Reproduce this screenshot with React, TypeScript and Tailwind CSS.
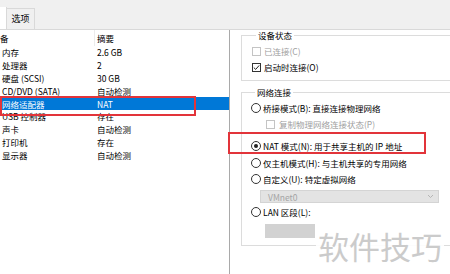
import React from 'react';

const rows: [string, string][] = [
  ['内存', '2.6 GB'],
  ['处理器', '2'],
  ['硬盘 (SCSI)', '30 GB'],
  ['CD/DVD (SATA)', '自动检测'],
  ['网络适配器', 'NAT'],
  ['USB 控制器', '存在'],
  ['声卡', '自动检测'],
  ['打印机', '存在'],
  ['显示器', '自动检测'],
];

function CheckBox({ checked, disabled }: { checked?: boolean; disabled?: boolean }) {
  return (
    <span
      className={`w-[9px] h-[9px] shrink-0 border bg-white flex items-center justify-center ${
        disabled ? 'border-[#c4c4c4]' : 'border-[#333]'
      }`}
    >
      {checked && (
        <svg width="7" height="7" viewBox="0 0 7 7">
          <path d="M0.8 3.6 L2.7 5.4 L6.2 1.4" stroke="#222" strokeWidth="1" fill="none" />
        </svg>
      )}
    </span>
  );
}

function Radio({ checked }: { checked?: boolean }) {
  return (
    <span className="w-[10px] h-[10px] shrink-0 rounded-full border border-[#333] bg-white flex items-center justify-center">
      {checked && <span className="w-[4px] h-[4px] rounded-full bg-[#222]" />}
    </span>
  );
}

export default function App() {
  return (
    <div
      className="relative w-[450px] h-[274px] overflow-hidden bg-white text-[8.5px] leading-[12px] text-black"
      style={{ fontFamily: '"Noto Sans CJK SC", "Noto Sans", sans-serif' }}
    >
      {/* Tab strip */}
      <div className="h-[30px] bg-[#f0f0f0] border-b border-[#d9d9d9] flex items-end">
        <div className="w-[7px] h-[22px] bg-white border-r border-[#d9d9d9]" />
        <div className="w-[28px] h-[21px] border-t border-r border-[#d9d9d9] bg-[#f0f0f0] flex items-center justify-center text-[9px]">
          选项
        </div>
      </div>

      <div className="flex h-[244px]">
        {/* Device list */}
        <div className="w-[230px] shrink-0 border-r border-[#a9a9a9] overflow-hidden">
          <div className="h-[16px] flex items-center">
            <div className="w-[95px] h-full flex items-center border-r border-[#ececec]">
              <span>备</span>
            </div>
            <div className="pl-[2px]">摘要</div>
          </div>
          {rows.map(([name, value], i) => (
            <div
              key={name}
              className={`h-[12.8px] flex items-center ${i === 4 ? 'bg-[#0078d7] text-white' : ''}`}
            >
              <div className="w-[97px] pl-[2px] whitespace-nowrap">{name}</div>
              <div className="whitespace-nowrap">{value}</div>
            </div>
          ))}
        </div>

        {/* Settings */}
        <div className="flex-1 pl-[11px] overflow-hidden">
          <fieldset className="border border-[#dcdcdc] mr-[-20px] pl-[10px] pb-[5px]">
            <legend className="ml-[4px] px-[2px] leading-[10px]">设备状态</legend>
            <div className="pt-[3px]">
              <div className="h-[16px] flex items-center gap-[3px] text-[#a0a0a0]">
                <CheckBox disabled />
                <span>已连接(C)</span>
              </div>
              <div className="h-[16px] flex items-center gap-[3px]">
                <CheckBox checked />
                <span>启动时连接(O)</span>
              </div>
            </div>
          </fieldset>

          <fieldset className="mt-[6px] border border-[#dcdcdc] mr-[-20px] pl-[9px] pb-[7px]">
            <legend className="ml-[4px] px-[2px] leading-[10px]">网络连接</legend>
            <div className="pt-[3px]">
              <div className="h-[16px] flex items-center gap-[2px]">
                <Radio />
                <span>桥接模式(B): 直接连接物理网络</span>
              </div>
              <div className="h-[16px] flex items-center gap-[4px] pl-[15px] text-[#a0a0a0]">
                <CheckBox disabled />
                <span>复制物理网络连接状态(P)</span>
              </div>
              <div className="mt-[6px] h-[16px] flex items-center gap-[2px]">
                <Radio checked />
                <span>NAT 模式(N): 用于共享主机的 IP 地址</span>
              </div>
              <div className="mt-[1px] h-[16px] flex items-center gap-[2px]">
                <Radio />
                <span>仅主机模式(H): 与主机共享的专用网络</span>
              </div>
              <div className="h-[16px] flex items-center gap-[2px]">
                <Radio />
                <span>自定义(U): 特定虚拟网络</span>
              </div>
              <div className="mt-[3px] ml-[9px] w-[179px] h-[13px] bg-[#e3e3e3] border border-[#d4d4d4] flex items-center justify-between pl-[7px] pr-[4px] text-[#a5a5a5]">
                <span>VMnet0</span>
                <svg width="7" height="5" viewBox="0 0 7 5">
                  <path d="M1 1 L3.5 3.5 L6 1" stroke="#b5b5b5" strokeWidth="1" fill="none" />
                </svg>
              </div>
              <div className="mt-[1px] h-[16px] flex items-center gap-[2px]">
                <Radio />
                <span>LAN 区段(L):</span>
              </div>
              <div className="mt-[4px] ml-[14px] w-[50px] h-[14px] bg-[#d2d2d2]" />
            </div>
          </fieldset>
        </div>
      </div>

      {/* Annotation boxes */}
      <div className="absolute left-0 top-[96px] w-[196px] h-[20px] border-2 border-[#e2343a]" />
      <div className="absolute left-[228px] top-[132px] w-[198px] h-[22px] border-2 border-[#e2343a]" />

      {/* Watermark */}
      <div className="absolute left-[316px] top-[225px] px-[2px] whitespace-nowrap bg-white/90 text-[31px] leading-[42px] text-[#cbcbcb]">
        软件技巧
      </div>
    </div>
  );
}
